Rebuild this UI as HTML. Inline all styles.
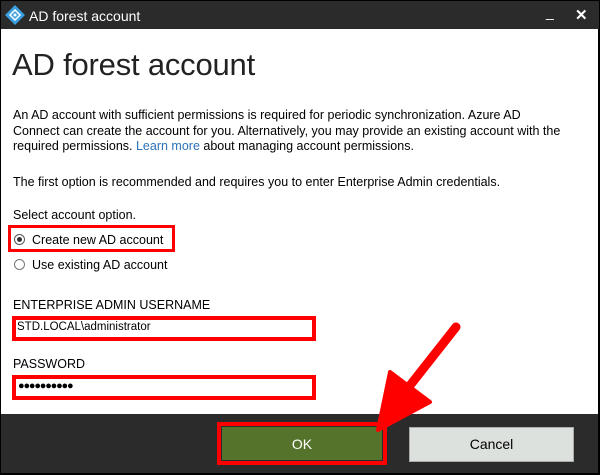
<!DOCTYPE html>
<html><head><style>
*{margin:0;padding:0;box-sizing:border-box}
body{width:600px;height:475px;background:#000;position:relative;overflow:hidden;font-family:"Liberation Sans",sans-serif;color:#000}
.abs{position:absolute}
#tb{left:1px;top:1px;width:598px;height:28px;background:#2b2b2b;color:#fff;font-size:14px}
#main{left:1px;top:29px;width:597px;height:385px;background:#fff}
#ft{left:1px;top:414px;width:597px;height:59px;background:#2b2b2b}
p{font-size:12.5px;line-height:15.6px;white-space:nowrap}
</style></head><body>
<div id="tb" class="abs">
 <svg class="abs" style="left:4px;top:4px" width="20" height="20" viewBox="0 0 20 20"><polygon points="10,0 20,10 10,20 0,10" fill="#3aa0e0"/><polygon points="10,5 15,10 10,15 5,10" fill="none" stroke="#fff" stroke-width="1.5"/><circle cx="10" cy="10" r="1.5" fill="#fff"/></svg>
 <div class="abs" style="left:28px;top:7px">AD forest account</div>
 <div class="abs" style="left:545px;top:3px;font-size:14px">_</div>
 <div class="abs" style="left:574px;top:5px;font-size:15px;font-weight:bold">✕</div>
</div>
<div id="main" class="abs">
 <div class="abs" style="left:11px;top:18px;font-size:31px;color:#222;letter-spacing:-0.2px">AD forest account</div>
 <p class="abs" style="left:12px;top:79px">An AD account with sufficient permissions is required for periodic synchronization. Azure AD<br>Connect can create the account for you. Alternatively, you may provide an existing account with the<br>required permissions. <span style="color:#2a73b8">Learn more</span> about managing account permissions.</p>
 <p class="abs" style="left:12px;top:146px">The first option is recommended and requires you to enter Enterprise Admin credentials.</p>
 <p class="abs" style="left:12px;top:179px">Select account option.</p>
 <div class="abs" style="left:7px;top:196px;width:167px;height:27px;border:3px solid #f00"></div>
 <div class="abs" style="left:13px;top:205px;width:11px;height:11px;border:1px solid #555;border-radius:50%"><div style="margin:2px;width:5px;height:5px;background:#333;border-radius:50%"></div></div>
 <p class="abs" style="left:31px;top:204px">Create new AD account</p>
 <div class="abs" style="left:13px;top:230px;width:11px;height:11px;border:1px solid #777;border-radius:50%"></div>
 <p class="abs" style="left:31px;top:229px">Use existing AD account</p>
 <p class="abs" style="left:12px;top:269px">ENTERPRISE ADMIN USERNAME</p>
 <div class="abs" style="left:11px;top:287px;width:304px;height:25px;border:4px solid #f00"></div>
 <div class="abs" style="left:16px;top:292px;font-size:11.5px">STD.LOCAL\administrator</div>
 <p class="abs" style="left:12px;top:328px">PASSWORD</p>
 <div class="abs" style="left:11px;top:346px;width:304px;height:25px;border:4px solid #f00"></div>
 <div class="abs" style="left:17px;top:351px;font-size:11px;letter-spacing:-1.2px;font-weight:bold">●●●●●●●●●●</div>
</div>
<div id="ft" class="abs">
 <div class="abs" style="left:216px;top:8px;width:170px;height:43px;border:4px solid #f00;background:#56732b"></div>
 <div class="abs" style="left:220px;top:12px;width:162px;height:35px;border:1px solid #2b2b2b"></div>
 <div class="abs" style="left:216px;top:22px;width:170px;text-align:center;color:#fff;font-size:14px">OK</div>
 <div class="abs" style="left:408px;top:13px;width:165px;height:35px;background:#dde1de;border:1px solid #aaa;text-align:center;font-size:14px;line-height:33px">Cancel</div>
</div>
<svg class="abs" style="left:0;top:0" width="600" height="475"><line x1="456" y1="327" x2="408" y2="388" stroke="#f00" stroke-width="9" stroke-linecap="round"/><polygon points="390,372 430,402 378,430" fill="#f00" stroke="#f00" stroke-width="4" stroke-linejoin="round"/></svg>
</body></html>
